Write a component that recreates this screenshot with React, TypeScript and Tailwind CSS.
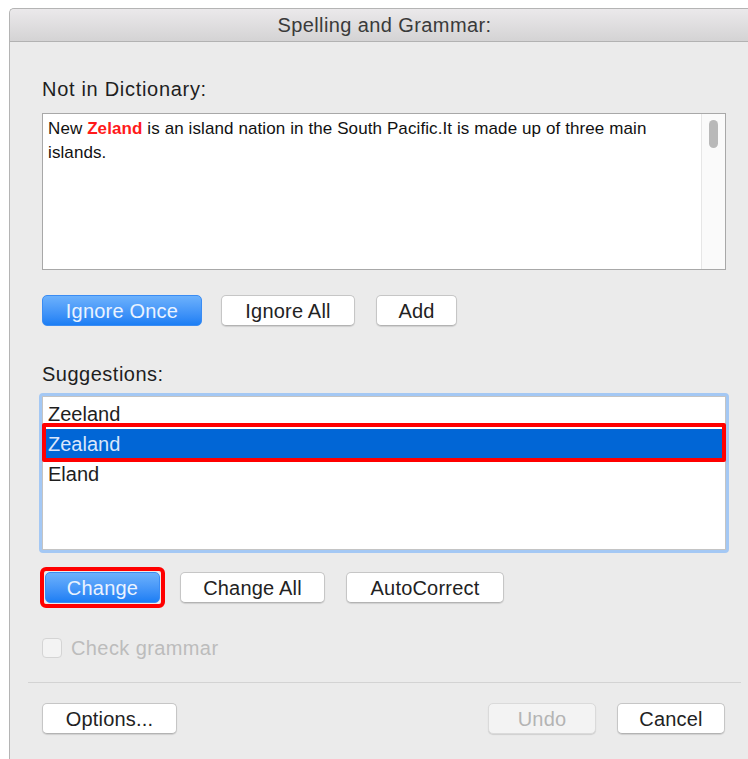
import React from "react";

const sans = "font-['Liberation_Sans',Arial,sans-serif]";

function PushButton({
  label,
  width,
  disabled = false,
}: {
  label: string;
  width: string;
  disabled?: boolean;
}) {
  return (
    <button
      className={`${width} h-[31px] rounded-[5px] border text-[20px] leading-none tracking-[0.2px] shadow-[0_1px_1px_rgba(0,0,0,0.12)] ${
        disabled
          ? "border-[#dadada] bg-[#f3f3f3] text-[#b4b4b4]"
          : "border-[#c6c6c6] border-b-[#b3b3b3] bg-white text-[#222]"
      }`}
    >
      {label}
    </button>
  );
}

function DefaultButton({ label, width }: { label: string; width: string }) {
  return (
    <button
      className={`${width} h-[31px] rounded-[5px] border border-[#3a8cf3] bg-gradient-to-b from-[#6cb1fc] to-[#1b7ef4] text-[20px] leading-none tracking-[0.2px] text-[#eaf3ff]`}
    >
      {label}
    </button>
  );
}

export default function App() {
  const suggestions = ["Zeeland", "Zealand", "Eland"];

  return (
    <div className={`h-[759px] w-[748px] overflow-hidden bg-white pl-[9px] pt-[8px] ${sans}`}>
      <div className="flex h-[800px] w-[750px] flex-col rounded-tl-[5px] border-l border-t border-[#b4b4b4] bg-[#ebebeb]">
        {/* title bar */}
        <div className="flex h-[33px] items-center justify-center rounded-tl-[5px] border-b border-[#b2b2b2] bg-gradient-to-b from-[#ebe9eb] to-[#d4d3d4] text-[20px] tracking-[0.4px] text-[#3a3a3a]">
          Spelling and Grammar:
        </div>

        <div className="flex flex-col pl-[32px] pr-[33px]">
          <div className="mt-[35px] h-[24px] text-[20px] leading-[24px] tracking-[0.7px] text-[#1e1e1e]">
            Not in Dictionary:
          </div>

          {/* sentence under check */}
          <div className="mt-[12px] flex h-[157px] w-[684px] border border-[#a8a8a8] bg-white">
            <div className="flex-1 pl-[5px] pt-[3px] text-[17px] leading-[24px] tracking-[0.1px] text-[#111]">
              <div className="whitespace-nowrap">
                <span>New </span>
                <span className="font-bold text-[#ff1a1a]">Zeland</span>
                <span> is an island nation in the South Pacific.It is made up of three main</span>
              </div>
              <div>islands.</div>
            </div>
            <div className="flex w-[24px] justify-center border-l border-[#e6e6e6] bg-[#fafafa] pt-[6px]">
              <div className="h-[28px] w-[9px] rounded-full bg-[#b9b9b9]" />
            </div>
          </div>

          <div className="mt-[25px] flex gap-[19px]">
            <DefaultButton label="Ignore Once" width="w-[160px]" />
            <div className="flex gap-[21px]">
              <PushButton label="Ignore All" width="w-[134px]" />
              <PushButton label="Add" width="w-[81px]" />
            </div>
          </div>

          <div className="mt-[36px] h-[24px] text-[20px] leading-[24px] tracking-[0.5px] text-[#1e1e1e]">
            Suggestions:
          </div>

          {/* suggestion list, focused */}
          <div className="-ml-[3px] mt-[7px] w-[690px] rounded-[4px] border-[3px] border-[#a4c8f4]">
            <div className="h-[154px] border border-[#c4c4c4] bg-white pt-[2px]">
              {suggestions.map((s) =>
                s === "Zealand" ? (
                  <div
                    key={s}
                    className="relative flex h-[30px] items-center bg-[#0166d6] pl-[5px] text-[20px] text-[#dbe7fb]"
                  >
                    {s}
                    <div className="absolute -bottom-[3px] -left-px -right-px -top-[6px] rounded-[2px] border-[4px] border-[#ff0000]" />
                  </div>
                ) : (
                  <div key={s} className="flex h-[30px] items-center pl-[5px] text-[20px] text-[#1e1e1e]">
                    {s}
                  </div>
                )
              )}
            </div>
          </div>

          <div className="mt-[19px] flex items-center">
            <div className="ml-[3px] rounded-[1px] outline-[4px] outline-offset-[1px] outline-[#ff0000] outline">
              <DefaultButton label="Change" width="w-[115px]" />
            </div>
            <div className="ml-[20px] flex gap-[21px]">
              <PushButton label="Change All" width="w-[145px]" />
              <PushButton label="AutoCorrect" width="w-[158px]" />
            </div>
          </div>

          <label className="mt-[34px] flex h-[21px] items-center gap-[9px]">
            <span className="h-[20px] w-[20px] rounded-[4px] border border-[#d4d4d4] bg-[#f3f3f3]" />
            <span className="text-[20px] tracking-[0.4px] text-[#bcbcbc]">Check grammar</span>
          </label>
        </div>

        <div className="mx-[18px] mt-[24px] border-t border-[#d3d3d3]" />

        <div className="mt-[20px] flex pl-[32px] pr-[34px]">
          <PushButton label="Options..." width="w-[135px]" />
          <div className="ml-auto flex gap-[21px]">
            <PushButton label="Undo" width="w-[108px]" disabled />
            <PushButton label="Cancel" width="w-[108px]" />
          </div>
        </div>
      </div>
    </div>
  );
}
